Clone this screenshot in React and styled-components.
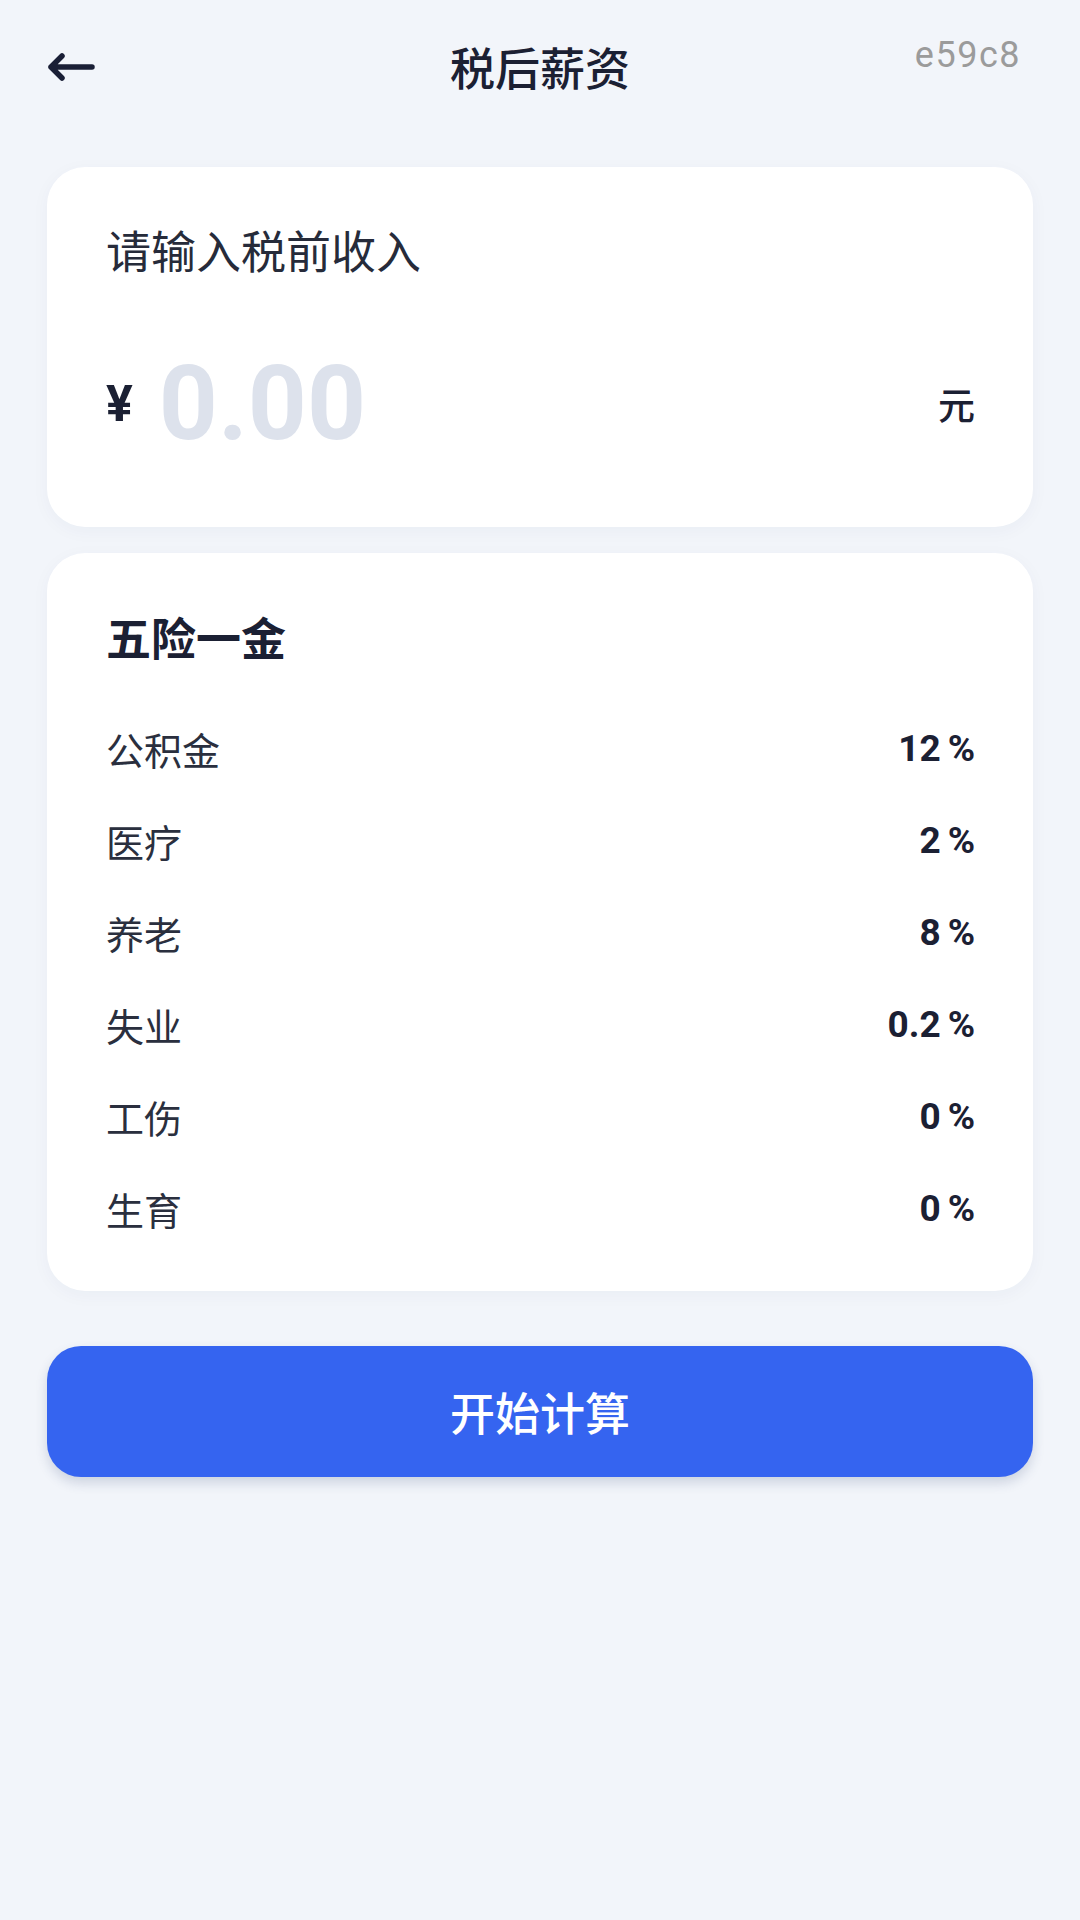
import React from "react"
import styled, { createGlobalStyle } from "styled-components"

const GlobalStyle = createGlobalStyle`
  html, body {
    margin: 0;
    padding: 0;
    background: #f2f5fa;
  }
  body {
    font-family: "Roboto", "Noto Sans CJK SC", sans-serif;
    color: #1b2033;
  }
`

const Page = styled.div`
  width: 1080px;
  min-height: 1920px;
  box-sizing: border-box;
  padding: 0 47px;
  background: #f2f5fa;
`

const Header = styled.header`
  height: 134px;
  display: grid;
  grid-template-columns: 1fr auto 1fr;
  align-items: center;
  margin-bottom: 33px;
`

const BackButton = styled.button`
  justify-self: start;
  display: flex;
  align-items: center;
  padding: 0;
  border: 0;
  background: none;
  cursor: pointer;
`

const Title = styled.h1`
  margin: 0;
  font-family: "Noto Sans CJK SC", sans-serif;
  font-size: 45px;
  font-weight: 500;
  line-height: 54px;
  color: #1b2033;
`

const Code = styled.span`
  justify-self: end;
  align-self: start;
  margin-top: 34px;
  margin-right: 12px;
  font-family: "Roboto", sans-serif;
  font-size: 36px;
  letter-spacing: 1.5px;
  line-height: 42px;
  color: #9b9b9b;
`

const Card = styled.section`
  background: #ffffff;
  border-radius: 38px;
  box-shadow: 0 4px 18px rgba(30, 50, 90, 0.04);
  padding: ${(p) => p.$pad};
  margin-bottom: 26px;
`

const InputLabel = styled.div`
  font-family: "Noto Sans CJK SC", sans-serif;
  font-size: 45px;
  line-height: 54px;
  color: #262b3a;
`

const AmountRow = styled.div`
  display: flex;
  align-items: center;
  height: 120px;
  margin-top: 67px;
`

const Currency = styled.span`
  font-family: "Roboto", sans-serif;
  font-size: 50px;
  font-weight: 700;
  color: #1b2033;
  margin-right: 26px;
`

const Amount = styled.span`
  flex: 1;
  font-family: "Roboto", sans-serif;
  font-size: 103px;
  font-weight: 700;
  line-height: 120px;
  color: #dde2ec;
`

const Unit = styled.span`
  font-family: "Noto Sans CJK SC", sans-serif;
  font-size: 37px;
  font-weight: 500;
  color: #1b2033;
`

const SectionTitle = styled.h2`
  margin: 0 0 38px;
  font-family: "Noto Sans CJK SC", sans-serif;
  font-size: 45px;
  font-weight: 700;
  line-height: 54px;
  color: #1b2033;
`

const Row = styled.div`
  display: flex;
  align-items: center;
  justify-content: space-between;
  height: 92px;
`

const RowLabel = styled.span`
  font-family: "Noto Sans CJK SC", sans-serif;
  font-size: 38px;
  color: #2a2f3e;
`

const RowValue = styled.span`
  font-family: "Roboto", sans-serif;
  font-size: 37px;
  font-weight: 700;
  color: #1b2033;
`

const Percent = styled.span`
  margin-left: 7px;
`

const CalcButton = styled.button`
  display: block;
  width: 100%;
  height: 131px;
  margin-top: 55px;
  border: 0;
  border-radius: 34px;
  background: #3564f0;
  box-shadow: 0 6px 12px rgba(40, 60, 110, 0.18);
  font-family: "Noto Sans CJK SC", sans-serif;
  font-size: 45px;
  font-weight: 500;
  color: #ffffff;
  cursor: pointer;
`

const rates = [
  { name: "公积金", value: "12" },
  { name: "医疗", value: "2" },
  { name: "养老", value: "8" },
  { name: "失业", value: "0.2" },
  { name: "工伤", value: "0" },
  { name: "生育", value: "0" },
]

function BackArrow() {
  return (
    <svg width="48" height="30" viewBox="0 0 48 30" fill="none">
      <path
        d="M4 15 H45 M15 4 L4 15 L15 26"
        stroke="#1a1f36"
        strokeWidth="5.5"
        strokeLinecap="round"
        strokeLinejoin="round"
      />
    </svg>
  )
}

function App() {
  return (
    <>
      <GlobalStyle />
      <Page>
        <Header>
          <BackButton>
            <BackArrow />
          </BackButton>
          <Title>税后薪资</Title>
          <Code>e59c8</Code>
        </Header>

        <Card $pad="56px 58px 63px 59px">
          <InputLabel>请输入税前收入</InputLabel>
          <AmountRow>
            <Currency>¥</Currency>
            <Amount>0.00</Amount>
            <Unit>元</Unit>
          </AmountRow>
        </Card>

        <Card $pad="57px 58px 37px 59px">
          <SectionTitle>五险一金</SectionTitle>
          {rates.map((r) => (
            <Row key={r.name}>
              <RowLabel>{r.name}</RowLabel>
              <RowValue>
                {r.value}
                <Percent>%</Percent>
              </RowValue>
            </Row>
          ))}
        </Card>

        <CalcButton>开始计算</CalcButton>
      </Page>
    </>
  )
}

export default App
